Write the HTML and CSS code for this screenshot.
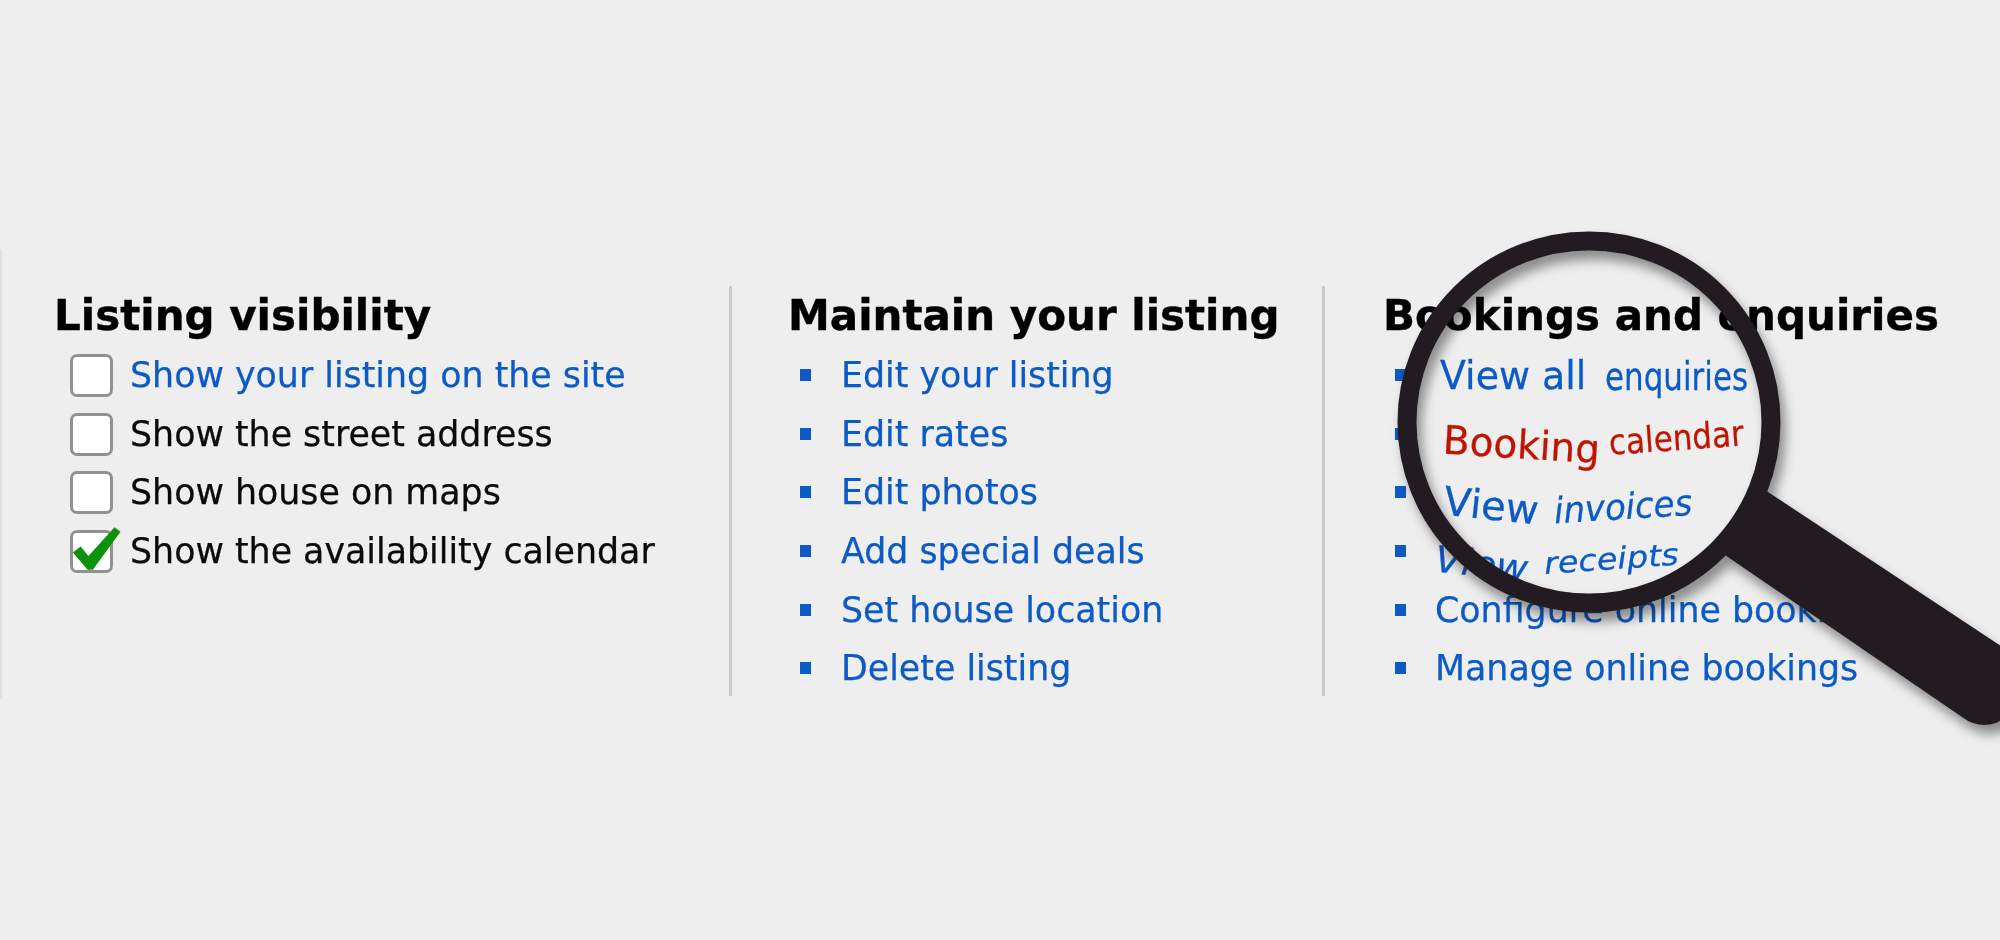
FILE: index.html
```html
<!DOCTYPE html>
<html lang="en">
<head>
<meta charset="utf-8">
<title>Listing dashboard</title>
<link rel="stylesheet" href="styles.css">
</head>
<body>
<main class="stage">
  <div class="columns">
    <section class="col col-vis">
      <h2 class="title">Listing visibility</h2>
      <ul class="checks">
        <li class="check-row link"><span class="box"></span>Show your listing on the site</li>
        <li class="check-row"><span class="box"></span>Show the street address</li>
        <li class="check-row"><span class="box"></span>Show house on maps</li>
        <li class="check-row"><span class="box">
          <svg class="tick" viewBox="0 0 60 50"><path d="M1 29 L10 22 L19 33 L49 0 L56 5 L24 49 L18 49 Z"/></svg>
        </span>Show the availability calendar</li>
      </ul>
    </section>
    <section class="col col-main">
      <h2 class="title">Maintain your listing</h2>
      <ul class="links">
        <li>Edit your listing</li>
        <li>Edit rates</li>
        <li>Edit photos</li>
        <li>Add special deals</li>
        <li>Set house location</li>
        <li>Delete listing</li>
      </ul>
    </section>
    <section class="col col-book">
      <h2 class="title">Bookings and enquiries</h2>
      <ul class="links">
        <li><span class="w m-first">View all</span> <span class="w m-enq">enquiries</span></li>
        <li class="hot"><span class="w w-booking">Booking</span> <span class="w w-calendar">calendar</span></li>
        <li><span class="w w-view">View</span> <span class="w w-invoices">invoices</span></li>
        <li><span class="w w-view2">View</span> <span class="w w-receipts">receipts</span></li>
        <li>Configure online bookings</li>
        <li>Manage online bookings</li>
      </ul>
    </section>
  </div>
  <svg class="glass" viewBox="0 0 2000 940" aria-hidden="true">
    <defs>
      <filter id="shade" x="-20%" y="-20%" width="140%" height="140%">
        <feDropShadow dx="5" dy="9" stdDeviation="6" flood-color="#000" flood-opacity="0.42"/>
      </filter>
    </defs>
    <g filter="url(#shade)">
      <ellipse class="ring" cx="1589" cy="422" rx="182" ry="181"/>
      <path class="handle" d="M1762 488 L2010 652 L2010 716 L1996 723 Q1978 729 1962 717 L1722 553 Z"/>
    </g>
  </svg>
</main>
</body>
</html>
```

FILE: styles.css
```css
* { box-sizing: border-box; }
html, body { margin: 0; height: 100%; }
body { background: #eeeeee; overflow: hidden; }
.stage { position: relative; width: 2000px; height: 940px; overflow: hidden; font-family: "DejaVu Sans", Verdana, sans-serif; }
.columns { display: flex; align-items: flex-start; }
.col { filter: blur(0.6px); }
.col-vis { width: 729px; margin-top: 249px; height: 450px; padding: 37px 0 0 52px; border-left: 2px solid #e0e0e0; }
.col-main { width: 593px; margin-top: 286px; height: 410px; padding-left: 56px; border-left: 3px solid #c9c9c9; }
.col-book { width: 678px; margin-top: 286px; height: 410px; padding-left: 58px; border-left: 3px solid #c9c9c9; }
.title { margin: 0; font-size: 42px; line-height: 60px; font-weight: 700; color: #000; white-space: nowrap; -webkit-text-stroke: 0.4px #000; }
.checks, .links { list-style: none; margin: 0; padding: 0; }
.checks li, .links li { height: 58.7px; line-height: 58.7px; font-size: 34.8px; white-space: nowrap; -webkit-text-stroke: 0.25px currentColor; }
.check-row { display: flex; align-items: center; padding-left: 16px; color: #0a0a0a; }
.check-row.link { color: #0b5ac6; }
.box { position: relative; flex: none; width: 43px; height: 43px; margin-right: 17px; background: #fff; border: 3px solid #919191; border-radius: 7px; }
.tick { position: absolute; left: -1px; top: -7px; width: 52px; height: 46px; }
.tick path { fill: #0b930b; }
.links li { position: relative; color: #0b5ac6; }
.col-main .links { margin-left: -56px; }
.col-main .links li { padding-left: 109px; }
.col-main .links li::before { left: 68px; }
.col-book .links { margin-left: -58px; }
.col-book .links li { padding-left: 110px; }
.col-book .links li::before { left: 70px; }
.links li::before { content: ""; position: absolute; top: 23px; width: 11px; height: 12px; background: #0b5ac6; }
.hot { color: #c21300 !important; }
.w { display: inline-block; transform-origin: left center; }
.m-first { transform: translate(5px, 1px) scale(1.09, 1.1); }
.m-enq { transform: translate(25px, 2px) scale(0.89, 1.1); }
.w-booking { transform: translate(8px, 6px) rotate(3.5deg) scale(1.12, 1.14); }
.w-calendar { font-size: 33px; transform: translate(23px, 8px) rotate(-4deg) scale(0.94, 1.08); }
.w-view { transform: translate(9px, 9px) rotate(6deg) scale(1.15, 1.14); }
.w-invoices { font-style: italic; font-size: 32px; transform: translate(25px, 18px) rotate(-3.5deg) scale(1.06, 1.12); }
.w-view2 { font-style: italic; transform: translate(0, 8px) rotate(6deg) scale(1.12, 1.05); }
.w-receipts { font-style: italic; font-size: 30px; transform: translate(15px, 11px) rotate(-4deg) scale(1.12, 1); }
.glass { position: absolute; left: 0; top: 0; width: 2000px; height: 940px; pointer-events: none; }
.ring { fill: none; stroke: #231f20; stroke-width: 19; }
.handle { fill: #231f20; }
```
